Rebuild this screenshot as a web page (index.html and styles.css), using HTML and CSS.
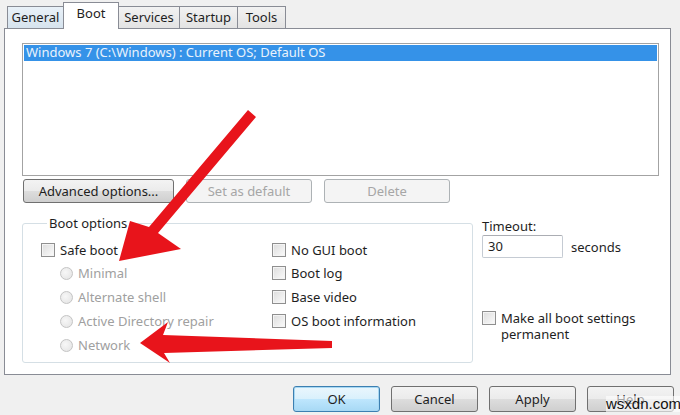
FILE: index.html
```html
<!DOCTYPE html>
<html lang="en">
<head>
    <meta charset="UTF-8">
    <title>System Configuration - Boot</title>
    <link rel="stylesheet" href="styles.css">
</head>
<body>
    <div class="dialog">
        <!-- Tab strip -->
        <div class="tabs">
            <div class="tab tab-first">General</div>
            <div class="tab tab-active">Boot</div>
            <div class="tab">Services</div>
            <div class="tab">Startup</div>
            <div class="tab">Tools</div>
        </div>

        <div class="panel">
            <div class="listbox">
                <div class="list-item selected">Windows 7 (C:\Windows) : Current OS; Default OS</div>
            </div>

            <div class="btn-row">
                <button class="btn btn-advanced">Advanced options...</button>
                <button class="btn btn-mid" disabled>Set as default</button>
                <button class="btn btn-mid" disabled>Delete</button>
            </div>

            <div class="lower">
                <fieldset class="group">
                    <legend>Boot options</legend>
                    <div class="group-grid">
                        <div class="col">
                            <label class="opt"><span class="check"></span>Safe boot</label>
                            <label class="opt sub disabled"><span class="radio"></span>Minimal</label>
                            <label class="opt sub disabled"><span class="radio"></span>Alternate shell</label>
                            <label class="opt sub disabled"><span class="radio"></span>Active Directory repair</label>
                            <label class="opt sub disabled"><span class="radio"></span>Network</label>
                        </div>
                        <div class="col">
                            <label class="opt"><span class="check"></span>No GUI boot</label>
                            <label class="opt"><span class="check"></span>Boot log</label>
                            <label class="opt"><span class="check"></span>Base video</label>
                            <label class="opt"><span class="check"></span>OS boot information</label>
                        </div>
                    </div>
                </fieldset>

                <div class="side">
                    <div class="timeout-label">Timeout:</div>
                    <div class="timeout-row">
                        <div class="textbox">30</div>
                        <span>seconds</span>
                    </div>
                    <label class="permanent"><span class="check"></span><span class="permanent-text">Make all boot settings permanent</span></label>
                </div>
            </div>
        </div>

        <div class="footer">
            <button class="btn btn-foot btn-default">OK</button>
            <button class="btn btn-foot">Cancel</button>
            <button class="btn btn-foot">Apply</button>
            <button class="btn btn-foot">Help</button>
        </div>
    </div>

    <div class="watermark">wsxdn.com</div>

    <!-- red annotation arrows -->
    <svg class="arrows" width="680" height="415" viewBox="0 0 680 415">
        <polygon points="248,110 256,117 158,233 181,249 119,261 130,221 149,227" fill="#e8141b"/>
        <polygon points="332,341 332,348 164,353 170,363 140,343 168,322 163,335" fill="#e8141b"/>
    </svg>
</body>
</html>
```

FILE: styles.css
```css
body {
    margin: 0;
    background-color: #f0f0f0;
    font-family: 'Noto Sans', 'Open Sans', sans-serif;
    font-size: 13px;
    color: #1e1e1e;
    width: 680px;
    height: 415px;
    overflow: hidden;
    position: relative;
}

.dialog {
    display: flex;
    flex-direction: column;
}

/* Tabs */
.tabs {
    display: flex;
    align-items: flex-end;
    height: 29px;
    padding-left: 7px;
    position: relative;
    z-index: 1;
}

.tab {
    height: 21px;
    line-height: 20px;
    text-align: center;
    border: 1px solid #898c95;
    border-bottom: none;
    border-left: none;
    background: linear-gradient(#f2f2f2, #e3e3e3);
    margin-bottom: 1px;
}

.tab-first {
    border-left: 1px solid #898c95;
    width: 55px;
    background: linear-gradient(#e9f1f8, #d6e3ee);
}

.tab-active {
    height: 25px;
    line-height: 21px;
    width: 54px;
    background: #fff;
    margin-bottom: 0;
    padding-bottom: 1px;
    border-left: 1px solid #898c95;
    margin-left: -1px;
}

.tab:nth-child(3) { width: 60px; }
.tab:nth-child(4) { width: 57px; }
.tab:nth-child(5) { width: 47px; }

/* Tab page */
.panel {
    margin-left: 4px;
    width: 667px;
    height: 347px;
    margin-top: -1px;
    border: 1px solid #898c95;
    background-color: #fff;
    padding: 14px 0 0 17px;
    box-sizing: border-box;
}

.listbox {
    width: 637px;
    height: 133px;
    border: 1px solid #a3a3a3;
    box-sizing: border-box;
    padding: 1px;
}

.list-item {
    height: 16px;
    line-height: 15px;
    padding-left: 2px;
}

.list-item.selected {
    background-color: #3592e8;
    color: #e9f2fc;
}

/* Buttons */
.btn {
    font-family: inherit;
    font-size: 13px;
    color: #1e1e1e;
    border: 1px solid #707070;
    border-radius: 3px;
    background: linear-gradient(#f3f3f3 0%, #ebebeb 50%, #dddddd 51%, #cfcfcf 100%);
    padding: 0;
    height: 24px;
}

.btn:disabled {
    color: #a6a6a6;
    border-color: #adb2b5;
    background: #f4f4f4;
}

.btn-row {
    display: flex;
    gap: 12px;
    margin-top: 3px;
    padding-left: 1px;
}

.btn-advanced { width: 151px; }
.btn-mid { width: 126px; }

/* Lower area */
.lower {
    display: flex;
    margin-top: 12px;
}

.group {
    width: 451px;
    height: 148px;
    margin: 0;
    padding: 8px 0 0 18px;
    border: 1px solid #d5dfe5;
    border-radius: 3px;
    box-sizing: border-box;
}

.group legend {
    padding: 0 2px;
    margin-left: 6px;
    line-height: 16px;
}

.group-grid {
    display: flex;
}

.col {
    display: flex;
    flex-direction: column;
}

.col:first-child { width: 231px; }

.opt {
    height: 24px;
    display: flex;
    align-items: center;
    gap: 5px;
}

.opt:first-child { height: 22px; }

.sub { padding-left: 19px; }

.disabled { color: #a0a0a0; }

.check {
    width: 12px;
    height: 12px;
    border: 1px solid #8f8f8f;
    background: linear-gradient(135deg, #dcdcdc, #fbfbfb);
    box-shadow: inset 0 0 0 1px #f4f4f4;
    flex-shrink: 0;
}

.radio {
    width: 11px;
    height: 11px;
    border: 1px solid #c4c4c4;
    border-radius: 50%;
    background: radial-gradient(circle at 40% 40%, #f7f7f7, #e2e2e2);
    flex-shrink: 0;
}

.side {
    margin-left: 9px;
    display: flex;
    flex-direction: column;
}

.timeout-label {
    line-height: 16px;
    margin-top: 3px;
}

.timeout-row {
    display: flex;
    align-items: center;
    gap: 8px;
    margin-top: 1px;
}

.textbox {
    width: 81px;
    height: 23px;
    line-height: 21px;
    border: 1px solid #c5cbd3;
    border-top-color: #abadb3;
    border-radius: 2px;
    box-sizing: border-box;
    padding-left: 5px;
}

.permanent {
    display: flex;
    align-items: flex-start;
    gap: 5px;
    margin-top: 52px;
    line-height: 16px;
}

.permanent-text { width: 150px; }

.permanent .check { margin-top: 1px; }

/* Dialog buttons */
.footer {
    display: flex;
    justify-content: flex-end;
    gap: 11px;
    margin-top: 11px;
    padding-right: 6px;
}

.btn-foot {
    width: 87px;
    height: 26px;
}

.btn-default {
    border-color: #3c7fb1;
    box-shadow: inset 0 0 0 1px #a7d8f3;
    background: linear-gradient(#eaf6fd 0%, #d9f0fc 50%, #bee6fd 51%, #a7d9f5 100%);
}

.watermark {
    position: absolute;
    left: 606px;
    top: 396px;
    font-family: 'Liberation Sans', sans-serif;
    font-size: 15px;
    color: #111;
    background: rgba(255, 255, 255, 0.6);
    line-height: 16px;
}

.arrows {
    position: absolute;
    left: 0;
    top: 0;
    pointer-events: none;
}
```
